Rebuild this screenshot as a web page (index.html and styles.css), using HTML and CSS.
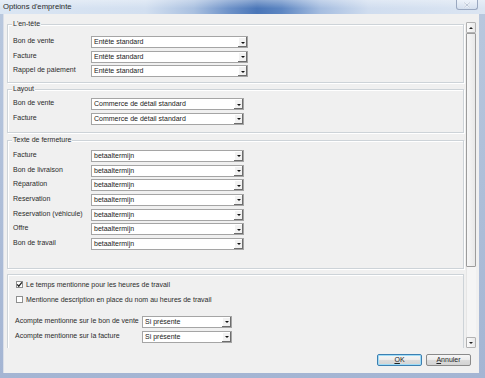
FILE: index.html
```html
<!DOCTYPE html>
<html lang="fr">
<head>
<meta charset="utf-8">
<title>Options d'empreinte</title>
<link rel="stylesheet" href="styles.css">
</head>
<body>
<div class="window">
  <div class="titlebar">
    <span class="title">Options d'empreinte</span>
    <span class="close">
      <svg width="8" height="6" viewBox="0 0 8 6"><path d="M1 0.5 L7 5.5 M7 0.5 L1 5.5" stroke="#ffffff" stroke-width="1.6"/><path d="M1 0.5 L7 5.5 M7 0.5 L1 5.5" stroke="#8ea0bd" stroke-width="0.6"/></svg>
    </span>
  </div>
  <div class="client">
    <div class="scroller">
      <div class="content">
        <div class="group g1">
          <div class="group-title">L'en-tête</div>
          <div class="rows wide">
            <span class="lbl">Bon de vente</span><div class="combo"><span class="val">Entête standard</span><span class="btn"></span></div>
            <span class="lbl">Facture</span><div class="combo"><span class="val">Entête standard</span><span class="btn"></span></div>
            <span class="lbl">Rappel de paiement</span><div class="combo"><span class="val">Entête standard</span><span class="btn"></span></div>
          </div>
        </div>
        <div class="group g2">
          <div class="group-title">Layout</div>
          <div class="rows">
            <span class="lbl">Bon de vente</span><div class="combo"><span class="val">Commerce de détail standard</span><span class="btn"></span></div>
            <span class="lbl">Facture</span><div class="combo"><span class="val">Commerce de détail standard</span><span class="btn"></span></div>
          </div>
        </div>
        <div class="group g3">
          <div class="group-title">Texte de fermeture</div>
          <div class="rows">
            <span class="lbl">Facture</span><div class="combo"><span class="val">betaaltermijn</span><span class="btn"></span></div>
            <span class="lbl">Bon de livraison</span><div class="combo"><span class="val">betaaltermijn</span><span class="btn"></span></div>
            <span class="lbl">Réparation</span><div class="combo"><span class="val">betaaltermijn</span><span class="btn"></span></div>
            <span class="lbl">Reservation</span><div class="combo"><span class="val">betaaltermijn</span><span class="btn"></span></div>
            <span class="lbl">Reservation (véhicule)</span><div class="combo"><span class="val">betaaltermijn</span><span class="btn"></span></div>
            <span class="lbl">Offre</span><div class="combo"><span class="val">betaaltermijn</span><span class="btn"></span></div>
            <span class="lbl">Bon de travail</span><div class="combo"><span class="val">betaaltermijn</span><span class="btn"></span></div>
          </div>
        </div>
        <div class="panel">
          <div class="check-row first"><span class="box checked"><svg width="7" height="7" viewBox="0 0 7 7"><path d="M1.2 3.4 L2.8 5.2 L5.9 1.4" fill="none" stroke="#1d1d1d" stroke-width="1.3"/></svg></span><span class="lbl">Le temps mentionne pour les heures de travail</span></div>
          <div class="check-row"><span class="box"></span><span class="lbl">Mentionne description en place du nom au heures de travail</span></div>
          <div class="rows small">
            <span class="lbl">Acompte mentionne sur le bon de vente</span><div class="combo"><span class="val">Si présente</span><span class="btn"></span></div>
            <span class="lbl">Acompte mentionne sur la facture</span><div class="combo"><span class="val">Si présente</span><span class="btn"></span></div>
          </div>
        </div>
      </div>
      <div class="scrollbar">
        <span class="arrow up"></span>
        <span class="thumb"></span>
        <span class="track"></span>
        <span class="arrow down"></span>
      </div>
    </div>
    <div class="buttons">
      <button class="button default"><u>O</u>K</button>
      <button class="button"><u>A</u>nnuler</button>
    </div>
  </div>
</div>
</body>
</html>
```
FILE: styles.css
```css
html, body {
  margin: 0;
  padding: 0;
}
body {
  width: 485px;
  height: 378px;
  overflow: hidden;
  font-family: "Liberation Sans", Arial, sans-serif;
  font-size: 7px;
  color: #222;
}
.window {
  width: 485px;
  height: 378px;
  display: flex;
  flex-direction: column;
  background: linear-gradient(to bottom, #b9c8de, #a4b5d3);
}
.titlebar {
  height: 14px;
  flex: 0 0 14px;
  display: flex;
  align-items: flex-start;
  background:
    linear-gradient(to bottom, rgba(255,255,255,0.35), rgba(255,255,255,0) 60%),
    linear-gradient(to right, #dbe6f3 0%, #d2dff0 30%, #a9c0e0 40%, #6f93c9 47%, #4a76b8 53%, #5d86c2 58%, #a5bde0 66%, #d0ddef 76%, #dbe5f2 100%);
}
.title {
  font-size: 7.7px;
  line-height: 14px;
  padding-left: 3px;
  color: #2a2a2a;
  flex: 1;
}
.close {
  width: 22px;
  height: 10px;
  margin-right: 7px;
  box-sizing: border-box;
  border: 1px solid #9aa8c0;
  border-top: none;
  border-radius: 0 0 3px 3px;
  background: linear-gradient(to bottom, #eef3fa, #d4dfee);
  display: flex;
  align-items: center;
  justify-content: center;
}
.client {
  flex: 1;
  margin: 0 6px 5px 3px;
  background: #f0f0f0;
  display: flex;
  flex-direction: column;
  box-shadow: inset 1px 0 0 #d9dee8;
}
.scroller {
  margin: 6px 3px 0 4px;
  height: 328px;
  display: flex;
  overflow: hidden;
}
.content {
  flex: 1;
  padding: 4px 1px 0 0;
  display: flex;
  flex-direction: column;
}
.group {
  border: 1px solid #cdd3d8;
  box-shadow: 1px 1px 0 #ffffff, inset 1px 1px 0 #ffffff;
  padding: 0 5px;
}
.group-title {
  display: table;
  margin: -5px 0 0 -1px;
  padding: 0 1px;
  line-height: 8px;
  background: #f0f0f0;
  color: #2b2b2b;
}
.g1 { padding-bottom: 5px; }
.g1 .rows { margin-top: 8px; }
.g2 { margin-top: 6px; padding-bottom: 7px; }
.g2 .rows { margin-top: 5px; }
.g3 { margin-top: 7px; padding-bottom: 18px; }
.g3 .rows { margin-top: 6px; }
.rows {
  display: grid;
  grid-template-columns: 78px 153px;
  grid-auto-rows: 12px;
  row-gap: 2.67px;
  align-items: center;
}
.rows.wide {
  grid-template-columns: 78px 157px;
}
.lbl {
  white-space: nowrap;
  line-height: 8px;
  color: #2b2b2b;
}
.rows .lbl {
  align-self: start;
  margin-top: 1px;
}
.combo {
  height: 12px;
  box-sizing: border-box;
  border: 1px solid #a5a5a5;
  background: #ffffff;
  display: flex;
  align-items: stretch;
}
.val {
  flex: 1;
  padding-left: 2px;
  line-height: 10px;
  white-space: nowrap;
  overflow: hidden;
  color: #222;
}
.btn {
  width: 9px;
  flex: 0 0 9px;
  background: #f2f2f2;
  box-shadow: inset -1px -1px 0 #6d6d6d, inset 1px 1px 0 #ffffff;
  display: flex;
  align-items: center;
  justify-content: center;
}
.btn::after {
  content: "";
  width: 0;
  height: 0;
  border-left: 2px solid transparent;
  border-right: 2px solid transparent;
  border-top: 2px solid #111;
  margin-top: 1px;
}
.panel {
  margin-top: 5px;
  border: 1px solid #cdd3d8;
  border-bottom: none;
  box-shadow: inset 1px 1px 0 #ffffff;
  padding: 6px 6px 40px 7px;
}
.check-row {
  display: flex;
  align-items: center;
  height: 8px;
  margin-top: 7px;
}
.check-row.first {
  margin-top: 0;
}
.box {
  width: 7px;
  height: 7px;
  box-sizing: border-box;
  border: 1px solid #8e8f8f;
  background: #ffffff;
  margin: 0 3px 0 1px;
  display: flex;
  align-items: center;
  justify-content: center;
}
.box.checked svg {
  flex: 0 0 7px;
}
.rows.small {
  margin-top: 12px;
  grid-template-columns: 127px 90px;
}
.scrollbar {
  width: 10px;
  flex: 0 0 10px;
  margin: 2px 0 0 1px;
  display: flex;
  flex-direction: column;
  background: #f5f5f5;
  box-shadow: inset 1px 0 0 #e6e6e6;
}
.arrow {
  height: 11px;
  flex: 0 0 11px;
  box-sizing: border-box;
  border: 1px solid #b2b2b2;
  border-radius: 1px;
  background: linear-gradient(to right, #fbfbfb, #e9e9e9);
  display: flex;
  align-items: center;
  justify-content: center;
}
.arrow::after {
  content: "";
  width: 0;
  height: 0;
  border-left: 2px solid transparent;
  border-right: 2px solid transparent;
}
.arrow.up::after {
  border-bottom: 2px solid #222;
}
.arrow.down::after {
  border-top: 2px solid #222;
}
.thumb {
  height: 234px;
  flex: 0 0 234px;
  box-sizing: border-box;
  border: 1px solid #9c9c9c;
  border-radius: 1px;
  background: linear-gradient(to right, #f7f7f7, #e8e8e8);
}
.track {
  flex: 1;
}
.buttons {
  display: flex;
  justify-content: flex-end;
  gap: 4px;
  margin: 6px 8px 0 0;
}
.button {
  width: 45px;
  height: 12px;
  padding: 0;
  box-sizing: border-box;
  border: 1px solid #8a8a8a;
  border-radius: 2px;
  background: linear-gradient(to bottom, #f6f6f6 0%, #ebebeb 50%, #dcdcdc 51%, #d3d3d3 100%);
  font-family: "Liberation Sans", Arial, sans-serif;
  font-size: 7px;
  line-height: 10px;
  color: #222;
}
.button.default {
  border-color: #3c7fb1;
  box-shadow: inset 0 0 0 1px #9fdcf7;
}
```
